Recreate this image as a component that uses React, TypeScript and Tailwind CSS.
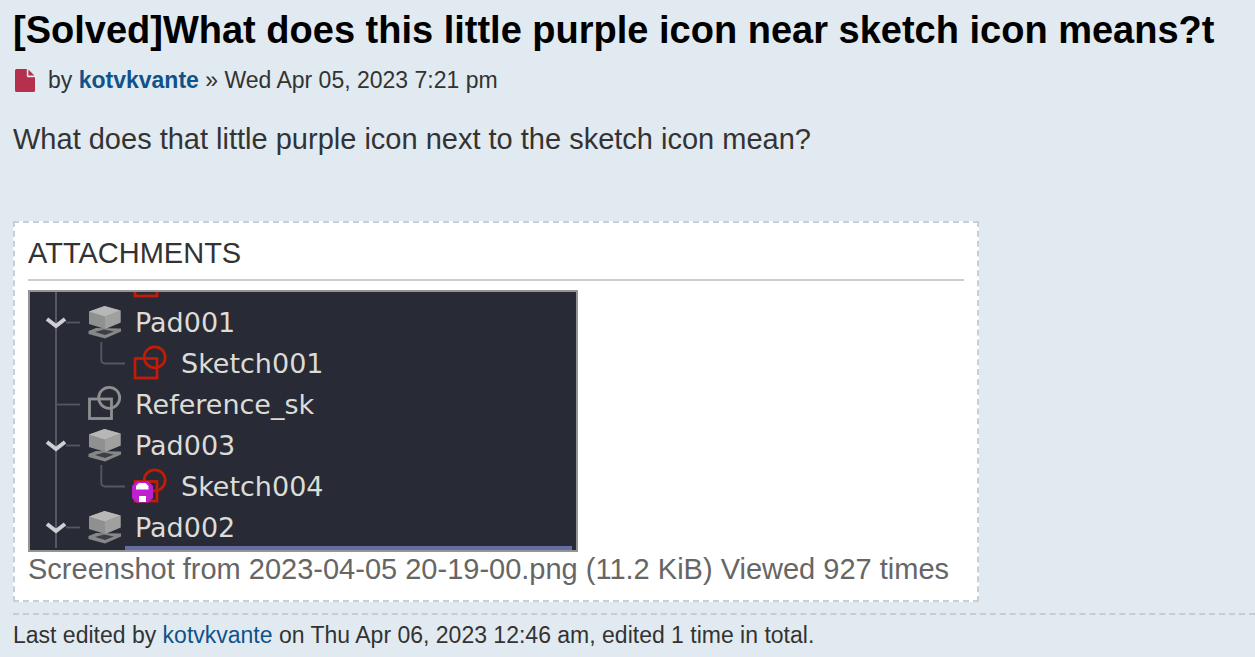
import type { ReactNode } from "react";

type IconKind = "pad" | "sketch" | "reference" | "attached";

interface TreeNode {
  label: string;
  icon: IconKind;
  child?: boolean;
}

const nodes: TreeNode[] = [
  { label: "Pad001", icon: "pad" },
  { label: "Sketch001", icon: "sketch", child: true },
  { label: "Reference_sk", icon: "reference" },
  { label: "Pad003", icon: "pad" },
  { label: "Sketch004", icon: "attached", child: true },
  { label: "Pad002", icon: "pad" },
];

function PadShape() {
  return (
    <g>
      <path d="M58.500 29 L66 26 L91 26.500 L91 29.500 L75 36.500 L58.500 32 Z" fill="#868787" />
      <path d="M65 30 L74 27.500 L84 29.500 L75 33 Z" fill="#3c3e48" />
      <path d="M59 9.500 L74.500 4 L90.500 8.500 L90.500 20.500 L75 27 L59 22 Z" fill="#8f9090" />
      <path d="M59 9.500 L74.500 4 L90.500 8.500 L75 14.500 Z" fill="#b6b7b6" />
      <path d="M75 14.500 L90.500 8.500 L90.500 20.500 L75 27 Z" fill="#a0a19f" />
    </g>
  );
}

function SketchShape({ color }: { color: string }) {
  return (
    <g fill="none" stroke={color} strokeWidth="2.8">
      <rect x="105" y="15.500" width="22" height="19.500" />
      <circle cx="124.700" cy="14.300" r="10.500" />
    </g>
  );
}

function Gutter({ icon, child = false }: { icon: IconKind; child?: boolean }) {
  return (
    <svg
      className={child ? "h-[41px] w-[151px] shrink-0 overflow-visible" : "h-[41px] w-[105px] shrink-0 overflow-visible"}
      viewBox={child ? "0 0 151 41" : "0 0 105 41"}
      aria-hidden="true"
    >
      <path d="M26 0 V41" stroke="#555762" strokeWidth="2" />
      {child && <path d="M71.3 -1 V16.500 Q71.300 20.500 75.300 20.500 H95" fill="none" stroke="#555762" strokeWidth="1.800" />}
      {icon === "reference" && <path d="M26 20.500 H50" stroke="#555762" strokeWidth="1.800" />}
      {icon === "pad" && (
        <>
          <path d="M36 20.500 H50" stroke="#555762" strokeWidth="1.800" />
          <path d="M17 17 L26 24 L35 17" fill="none" stroke="#cfcfd6" strokeWidth="4" />
          <PadShape />
        </>
      )}
      {icon === "reference" && (
        <g transform="translate(-45.500 -0.500)">
          <SketchShape color="#8e8f91" />
        </g>
      )}
      {(icon === "sketch" || icon === "attached") && <SketchShape color="#c01c08" />}
      {icon === "attached" && (
        <>
          <path d="M106.500 15.500 H118.500 L123 20 V32 L118.500 36.500 H106.500 L102 32 V20 Z" fill="#c021d0" />
          <path d="M109 17 H115.500 L118.500 20 V23.500 H106 V20 Z" fill="#fff" />
          <rect x="109" y="30" width="7" height="6" fill="#fff" />
        </>
      )}
    </svg>
  );
}

function ModelTree() {
  return (
    <div className="h-[262px] w-[550px] max-w-full overflow-hidden border-2 border-[#949496] bg-[#282a36]">
      <div className="flex h-[10px] items-end overflow-hidden">
        <Gutter icon="sketch" child />
      </div>
      <ul>
        {nodes.map((node) => (
          <li key={node.label} className="flex h-[41px] items-center">
            <Gutter icon={node.icon} child={node.child} />
            <span className="font-['DejaVu_Sans',sans-serif] text-[27px] leading-[40px] text-[#dcdcd6]">
              {node.label}
            </span>
          </li>
        ))}
      </ul>
      <div className="-mt-[2px] mr-[4px] ml-[95px] h-[41px] bg-[#626fa0]" />
    </div>
  );
}

function UserLink({ children, bold = false }: { children: ReactNode; bold?: boolean }) {
  return (
    <a href="#kotvkvante" className={bold ? "font-bold text-[#105289]" : "text-[#105289]"}>
      {children}
    </a>
  );
}

export default function App() {
  return (
    <main className="min-h-screen overflow-hidden bg-[#e1eaf1] pl-[13px] font-['Liberation_Sans',Arial,sans-serif] text-[#333333]">
      <article>
        <h1 className="pt-[8px] text-[38px] leading-[44px] font-bold whitespace-nowrap text-black">
          [Solved]What does this little purple icon near sketch icon means?t
        </h1>
        <p className="flex items-center pt-[14px] text-[23px] leading-[28px]">
          <svg className="mr-[13px] ml-[2px] h-[23px] w-[20px]" viewBox="0 0 20 23" aria-hidden="true">
            <path d="M1.500 0 H11.800 V6.800 Q11.800 8.300 13.300 8.300 H20 V21.500 Q20 23 18.500 23 H1.500 Q0 23 0 21.500 V1.500 Q0 0 1.500 0 Z" fill="#b5304c" />
            <path d="M13.400 0.500 L19.400 6.600 H13.400 Z" fill="#b5304c" />
          </svg>
          <span>
            by <UserLink bold>kotvkvante</UserLink> » <time dateTime="2023-04-05T19:21">Wed Apr 05, 2023 7:21 pm</time>
          </span>
        </p>
        <p className="pt-[25px] text-[29px] leading-[41px]">What does that little purple icon next to the sketch icon mean?</p>
        <dl className="mt-[61px] w-[966px] max-w-full border-2 border-dashed border-[#c9d0d5] bg-white px-[13px] pt-[10px] pb-[13px] text-[29px]">
          <dt className="mb-[9px] border-b-2 border-[#c9ced3] pb-[6px] leading-[40px]">ATTACHMENTS</dt>
          <dd>
            <ModelTree />
            <p className="leading-[35px] text-[#666666]">Screenshot from 2023-04-05 20-19-00.png (11.2 KiB) Viewed 927 times</p>
          </dd>
        </dl>
        <footer className="mt-[11px] border-t-2 border-dashed border-[#c9cccd] pt-[6px] text-[23px] leading-[28px]">
          Last edited by <UserLink>kotvkvante</UserLink> on Thu Apr 06, 2023 12:46 am, edited 1 time in total.
        </footer>
      </article>
    </main>
  );
}
